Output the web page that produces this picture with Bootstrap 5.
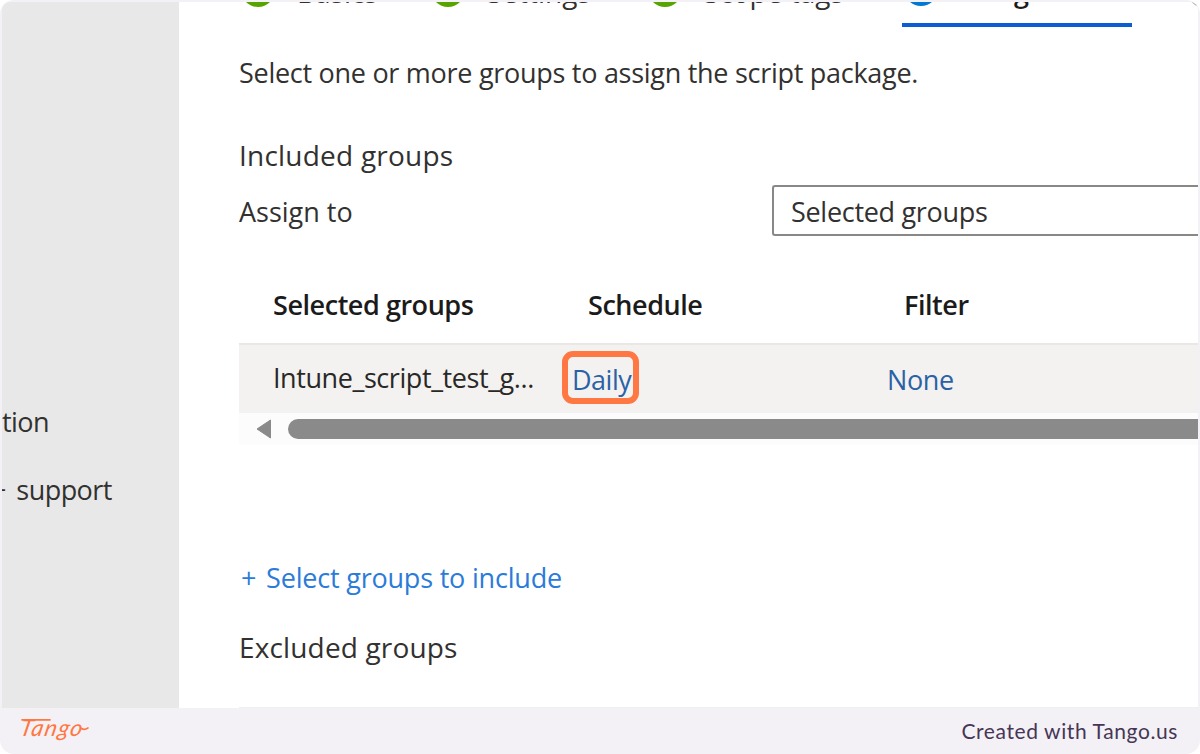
<!DOCTYPE html>
<html lang="en">
<head>
<meta charset="utf-8">
<meta name="viewport" content="width=device-width, initial-scale=1">
<title>Assignments</title>
<link href="https://cdn.jsdelivr.net/npm/bootstrap@5.3.0/dist/css/bootstrap.min.css" rel="stylesheet">
<style>
body{font-family:"Open Sans","Noto Sans",sans-serif;background:#fff;color:#323130;font-size:27px;line-height:40px;overflow:hidden}
.shell{width:1200px;height:754px;background:#f3f1f6;padding:2px 2px 0;border-radius:14px}
.screen{height:706px;border-radius:8px 8px 0 0;background:#fff}
.side{width:177px;background:#e8e8e8;padding-top:400px;letter-spacing:-.55px}
.side div{margin-bottom:28px}
.side .clipped{margin-left:-11px;word-spacing:4px}
.main{padding-left:60px;min-width:0}
.steps{height:25px;margin-left:2px;font-size:28px}
.step{height:25px;width:190px;gap:22px}
.step svg{margin-top:-29px}
.step span{margin-top:-30px;height:40px}
.step.wide{width:217px}
.step.current{border-bottom:4px solid #0a5dd2;width:230px;margin-left:37px;margin-right:55px;padding-left:2px;font-weight:600;font-size:27px;letter-spacing:.6px;color:#1b1b1b}
.intro{margin-top:26px;letter-spacing:-.28px}
.section-name{font-size:28px;letter-spacing:.15px}
.included{margin:42px 0 1px;letter-spacing:.22px}
.picker{width:426px;height:51px;border:2px solid #8a8886;border-right:0;border-radius:3px 0 0 3px;margin-top:9px;padding:5px 0 0 17px;letter-spacing:-.3px}
.grid-row{display:grid;grid-template-columns:315px 299px 1fr;padding-left:34px}
.grid-head{grid-template-columns:315px 316px 1fr;font-weight:600;color:#1b1b1b;height:58px;margin-top:49px;letter-spacing:-.45px}
.grid-item{height:70px;background:#f3f2f0;border-top:2px solid #e9e8e7}
.group-name{padding-top:13px;letter-spacing:-.42px;color:#292827}
.filter-link{padding-top:15px;letter-spacing:-.4px}
.filter-link,.hit{color:#2b62a6;text-decoration:none}
.hit{border:6px solid #ff7742;border-radius:11px;width:77px;height:53px;margin:6px 0 0 -26px;padding:3px 0 0 4px;letter-spacing:-.5px}
.scroller{height:32px;background:#fcfcfc;padding-left:17px}
.thumb{height:20px;background:#8a8a8a;border-radius:10px 0 0 10px;margin-left:16px}
.add{display:block;color:#2b7bd9;text-decoration:none;margin:113px 0 29px;letter-spacing:-.2px}
.add .plus{margin:0 3px 0 2px}
.next-section{margin-top:40px;border-top:1px solid #efeef3}
.foot{height:46px;padding:0 20px 0 16px}
.brand{font-family:Lato,sans-serif;font-style:italic;font-size:23px}
.credit{font-family:Lato,sans-serif;font-size:21px;letter-spacing:.6px;color:#463655;line-height:45px}
</style>
</head>
<body>
<div class="shell">
  <div class="screen d-flex overflow-hidden">
    <aside class="side flex-shrink-0 overflow-hidden text-nowrap">
      <div>tion</div>
      <div class="clipped">+ support</div>
    </aside>
    <main class="main flex-grow-1 overflow-hidden text-nowrap">
      <nav class="steps d-flex overflow-hidden">
        <div class="step d-flex flex-shrink-0"><svg width="34" height="34" class="flex-shrink-0"><circle cx="17" cy="17" r="17" fill="#57a300"/></svg><span>Basics</span></div>
        <div class="step wide d-flex flex-shrink-0"><svg width="34" height="34" class="flex-shrink-0"><circle cx="17" cy="17" r="17" fill="#57a300"/></svg><span>Settings</span></div>
        <div class="step wide d-flex flex-shrink-0"><svg width="34" height="34" class="flex-shrink-0"><circle cx="17" cy="17" r="17" fill="#57a300"/></svg><span>Scope tags</span></div>
        <div class="step current d-flex flex-shrink-0"><svg width="34" height="34" class="flex-shrink-0"><circle cx="17" cy="16" r="17" fill="#0078d4"/></svg><span>Assignments</span></div>
        <div class="step d-flex flex-shrink-0"><svg width="36" height="36" class="flex-shrink-0"><circle cx="18" cy="17" r="17" fill="none" stroke="#b0b0b0" stroke-width="2"/></svg></div>
      </nav>
      <div class="intro">Select one or more groups to assign the script package.</div>
      <div class="section-name included">Included groups</div>
      <div class="d-flex justify-content-between">
        <label class="mt-3">Assign to</label>
        <div class="picker">Selected groups</div>
      </div>
      <div class="grid-row grid-head"><div>Selected groups</div><div>Schedule</div><div>Filter</div></div>
      <div class="grid-row grid-item">
        <div class="group-name">Intune_script_test_g...</div>
        <div class="hit">Daily</div>
        <a class="filter-link" href="#">None</a>
      </div>
      <div class="scroller d-flex align-items-center">
        <svg width="16" height="20"><path d="M14.500 1v18L1 10z" fill="#8a8a8a" stroke="#8a8a8a" stroke-linejoin="round"/></svg>
        <div class="thumb flex-grow-1"></div>
      </div>
      <a class="add" href="#"><span class="plus">+</span> Select groups to include</a>
      <div class="section-name">Excluded groups</div>
      <div class="next-section"></div>
    </main>
  </div>
  <footer class="foot d-flex justify-content-between">
    <svg width="76" height="46" viewBox="0 0 76 46" role="img" aria-label="Tango">
      <text class="brand" transform="translate(1 28) skewX(-12)" textLength="62" lengthAdjust="spacing" fill="#ff7742">Tango</text>
      <path d="M4 11.800H32M63.500 20.500c2.500 1.500 4 1.200 6.500-.6" fill="none" stroke="#ff7742" stroke-width="1.700" stroke-linecap="round"/>
    </svg>
    <span class="credit">Created with Tango.us</span>
  </footer>
</div>
<script src="https://cdn.jsdelivr.net/npm/bootstrap@5.3.0/dist/js/bootstrap.bundle.min.js"></script>
</body>
</html>
